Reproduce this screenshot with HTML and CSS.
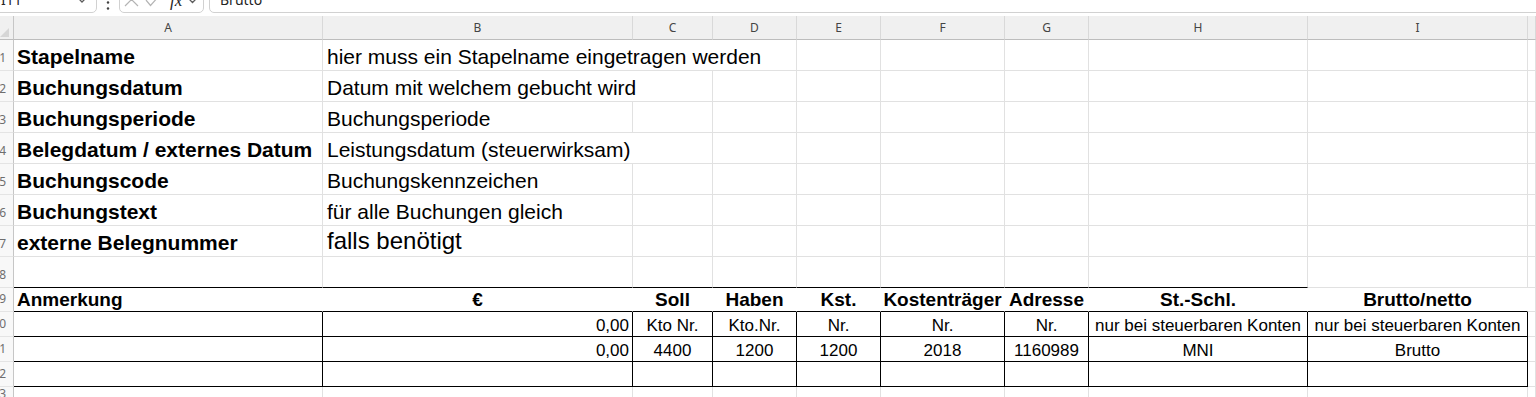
FILE: index.html
```html
<!DOCTYPE html>
<html lang="de">
<head>
    <meta charset="UTF-8">
    <meta name="viewport" content="width=device-width, initial-scale=1.0">
    <title>Buchungsstapel</title>
    <link rel="stylesheet" href="styles.css">
</head>
<body>
    <!-- formula bar, only its lower edge is visible -->
    <div class="formula-bar">
        <div class="name-box">
            <span>I11</span>
            <svg class="chevron" width="12" height="8" viewBox="0 0 12 8"><path d="M1 1 L6 6 L11 1" /></svg>
        </div>
        <div class="more">
            <svg width="4" height="13" viewBox="0 0 4 13"><circle cx="2" cy="2.5" r="1.2" /><circle cx="2" cy="8.5" r="1.2" /></svg>
        </div>
        <div class="fx-box">
            <svg class="muted" width="15" height="15" viewBox="0 0 15 15"><path d="M1 1 L14 14 M14 1 L1 14" /></svg>
            <svg class="muted" width="15" height="12" viewBox="0 0 15 12"><path d="M1 5 L5.5 10.5 L14 1" /></svg>
            <span class="fx">fx</span>
            <svg class="chevron" width="9" height="6" viewBox="0 0 9 6"><path d="M1 1 L4.5 4.5 L8 1" /></svg>
        </div>
        <div class="formula-input">Brutto</div>
    </div>

    <div class="sheet">
        <div class="sheet-row col-heads">
            <div class="corner"><svg width="10" height="10" viewBox="0 0 10 10"><path d="M0 10 L9 1 L9 10 Z" /></svg></div>
            <div class="col-head">A</div>
            <div class="col-head">B</div>
            <div class="col-head">C</div>
            <div class="col-head">D</div>
            <div class="col-head">E</div>
            <div class="col-head">F</div>
            <div class="col-head">G</div>
            <div class="col-head">H</div>
            <div class="col-head">I</div>
            <div class="col-head"></div>
        </div>

        <div class="sheet-row tall">
            <div class="row-head">1</div>
            <div class="cell label">Stapelname</div>
            <div class="cell text span-3">hier muss ein Stapelname eingetragen werden</div>
            <div class="cell"></div><div class="cell"></div><div class="cell"></div>
            <div class="cell"></div><div class="cell"></div><div class="cell"></div>
        </div>
        <div class="sheet-row tall">
            <div class="row-head">2</div>
            <div class="cell label">Buchungsdatum</div>
            <div class="cell text span-2">Datum mit welchem gebucht wird</div>
            <div class="cell"></div><div class="cell"></div><div class="cell"></div><div class="cell"></div>
            <div class="cell"></div><div class="cell"></div><div class="cell"></div>
        </div>
        <div class="sheet-row tall">
            <div class="row-head">3</div>
            <div class="cell label">Buchungsperiode</div>
            <div class="cell text">Buchungsperiode</div>
            <div class="cell"></div><div class="cell"></div><div class="cell"></div><div class="cell"></div>
            <div class="cell"></div><div class="cell"></div><div class="cell"></div><div class="cell"></div>
        </div>
        <div class="sheet-row tall">
            <div class="row-head">4</div>
            <div class="cell label">Belegdatum / externes Datum</div>
            <div class="cell text span-2">Leistungsdatum (steuerwirksam)</div>
            <div class="cell"></div><div class="cell"></div><div class="cell"></div><div class="cell"></div>
            <div class="cell"></div><div class="cell"></div><div class="cell"></div>
        </div>
        <div class="sheet-row tall">
            <div class="row-head">5</div>
            <div class="cell label">Buchungscode</div>
            <div class="cell text">Buchungskennzeichen</div>
            <div class="cell"></div><div class="cell"></div><div class="cell"></div><div class="cell"></div>
            <div class="cell"></div><div class="cell"></div><div class="cell"></div><div class="cell"></div>
        </div>
        <div class="sheet-row tall">
            <div class="row-head">6</div>
            <div class="cell label">Buchungstext</div>
            <div class="cell text">für alle Buchungen gleich</div>
            <div class="cell"></div><div class="cell"></div><div class="cell"></div><div class="cell"></div>
            <div class="cell"></div><div class="cell"></div><div class="cell"></div><div class="cell"></div>
        </div>
        <div class="sheet-row tall">
            <div class="row-head">7</div>
            <div class="cell label">externe Belegnummer</div>
            <div class="cell big">falls benötigt</div>
            <div class="cell"></div><div class="cell"></div><div class="cell"></div><div class="cell"></div>
            <div class="cell"></div><div class="cell"></div><div class="cell"></div><div class="cell"></div>
        </div>
        <div class="sheet-row tall">
            <div class="row-head">8</div>
            <div class="cell rule"></div><div class="cell rule"></div><div class="cell rule"></div><div class="cell rule"></div>
            <div class="cell rule"></div><div class="cell rule"></div><div class="cell rule"></div><div class="cell rule"></div>
            <div class="cell"></div><div class="cell"></div>
        </div>

        <!-- booking table -->
        <div class="sheet-row head-row">
            <div class="row-head">9</div>
            <div class="cell th">Anmerkung</div>
            <div class="cell th center">€</div>
            <div class="cell th center">Soll</div>
            <div class="cell th center">Haben</div>
            <div class="cell th center">Kst.</div>
            <div class="cell th center">Kostenträger</div>
            <div class="cell th center">Adresse</div>
            <div class="cell th center">St.-Schl.</div>
            <div class="cell th center">Brutto/netto</div>
            <div class="cell"></div>
        </div>
        <div class="sheet-row data-row">
            <div class="row-head">10</div>
            <div class="cell td"></div>
            <div class="cell td right">0,00</div>
            <div class="cell td center">Kto Nr.</div>
            <div class="cell td center">Kto.Nr.</div>
            <div class="cell td center">Nr.</div>
            <div class="cell td center">Nr.</div>
            <div class="cell td center">Nr.</div>
            <div class="cell td center">nur bei steuerbaren Konten</div>
            <div class="cell td center">nur bei steuerbaren Konten</div>
            <div class="cell"></div>
        </div>
        <div class="sheet-row data-row">
            <div class="row-head">11</div>
            <div class="cell td"></div>
            <div class="cell td right">0,00</div>
            <div class="cell td center">4400</div>
            <div class="cell td center">1200</div>
            <div class="cell td center">1200</div>
            <div class="cell td center">2018</div>
            <div class="cell td center">1160989</div>
            <div class="cell td center">MNI</div>
            <div class="cell td center">Brutto</div>
            <div class="cell"></div>
        </div>
        <div class="sheet-row data-row">
            <div class="row-head">12</div>
            <div class="cell td"></div><div class="cell td"></div><div class="cell td"></div>
            <div class="cell td"></div><div class="cell td"></div><div class="cell td"></div>
            <div class="cell td"></div><div class="cell td"></div><div class="cell td"></div>
            <div class="cell"></div>
        </div>
        <div class="sheet-row last-row">
            <div class="row-head">13</div>
            <div class="cell"></div><div class="cell"></div><div class="cell"></div><div class="cell"></div>
            <div class="cell"></div><div class="cell"></div><div class="cell"></div><div class="cell"></div>
            <div class="cell"></div><div class="cell"></div>
        </div>
    </div>
</body>
</html>
```

FILE: styles.css
```css
* {
    margin: 0;
    padding: 0;
    box-sizing: border-box;
}

body {
    background-color: #ffffff;
    color: #000000;
    font-family: "Liberation Sans", Arial, sans-serif;
    overflow: hidden;
}

/* Formula bar */
.formula-bar {
    height: 13px;
    display: flex;
    align-items: flex-end;
    overflow: hidden;
    font-family: "Noto Sans", sans-serif;
    font-size: 14px;
    color: #242424;
}

.name-box {
    margin-left: -6px;
    width: 103px;
    height: 30px;
    border: 1px solid #d1d1d1;
    border-radius: 0 0 5px 5px;
    display: flex;
    align-items: flex-end;
    justify-content: space-between;
    padding: 0 8px 4px 6px;
    line-height: 16px;
}

.chevron path {
    fill: none;
    stroke: #5c5c5c;
    stroke-width: 1.3;
}

.name-box .chevron {
    margin-bottom: 4px;
}

.more {
    width: 22px;
    height: 13px;
    display: flex;
    justify-content: center;
    align-items: flex-end;
}

.more circle {
    fill: #424242;
}

.fx-box {
    width: 85px;
    height: 30px;
    border: 1px solid #d1d1d1;
    border-radius: 0 0 5px 5px;
    display: flex;
    align-items: flex-end;
    gap: 6px;
    padding: 0 4px 5px 4px;
}

.muted path {
    fill: none;
    stroke: #b4b4b4;
    stroke-width: 1.2;
}

.fx {
    font-family: "Liberation Serif", serif;
    font-style: italic;
    font-size: 17px;
    line-height: 16px;
    margin-left: 4px;
    margin-bottom: -2px;
}

.fx-box .chevron {
    margin-bottom: 3px;
}

.formula-input {
    flex-grow: 1;
    margin-left: 5px;
    margin-right: -10px;
    height: 30px;
    border: 1px solid #d1d1d1;
    border-radius: 0 0 5px 5px;
    display: flex;
    align-items: flex-end;
    padding: 0 10px 4px 10px;
    line-height: 16px;
}

/* Sheet grid */
.sheet {
    margin-top: 3px;
}

.sheet-row {
    display: grid;
    grid-template-columns: 14px 309px 310px 80px 84px 84px 124px 84px 219px 220px 1fr;
}

.col-heads {
    height: 24px;
}

.corner,
.col-head {
    background-color: #f0f0f0;
    border-bottom: 1px solid #bdbdbd;
}

.corner {
    border-right: 1px solid #c6c6c6;
    display: flex;
    align-items: flex-end;
    padding-bottom: 2px;
}

.corner path {
    fill: #d6d6d6;
}

.col-head {
    border-right: 1px solid #d9d9d9;
    display: flex;
    justify-content: center;
    align-items: flex-end;
    padding-bottom: 4px;
    font-family: "Noto Sans", sans-serif;
    font-size: 12px;
    line-height: 14px;
    color: #444444;
}

.tall {
    height: 31px;
}

.head-row {
    height: 24px;
}

.data-row {
    height: 25px;
}

.last-row {
    height: 10px;
}

.row-head {
    background-color: #f8f8f8;
    border-right: 1px solid #c6c6c6;
    border-bottom: 1px solid #e4e4e4;
    display: flex;
    justify-content: flex-end;
    align-items: flex-end;
    padding: 0 7px 5px 0;
    overflow: hidden;
    font-family: "Noto Sans", sans-serif;
    font-size: 12px;
    line-height: 14px;
    color: #6e6e6e;
}

.last-row .row-head {
    align-items: flex-start;
    padding-bottom: 0;
    border-bottom: none;
}

.cell {
    border-right: 1px solid #e1e1e1;
    border-bottom: 1px solid #e1e1e1;
    display: flex;
    align-items: flex-end;
    padding: 0 3px;
    white-space: nowrap;
}

.last-row .cell {
    border-bottom: none;
}

.span-2 {
    grid-column: span 2;
}

.span-3 {
    grid-column: span 3;
}

.center {
    justify-content: center;
}

.right {
    justify-content: flex-end;
}

.label {
    font-weight: bold;
    font-size: 21px;
    line-height: 24px;
    padding-bottom: 1px;
}

.text {
    font-size: 21px;
    line-height: 24px;
    padding-left: 4px;
    padding-bottom: 1px;
}

.big {
    font-size: 24px;
    line-height: 27px;
    padding-left: 4px;
    padding-bottom: 2px;
}

/* top rule of the booking table */
.rule {
    border-bottom-color: #000000;
}

.th {
    font-weight: bold;
    font-size: 19px;
    line-height: 22px;
    border-right-color: transparent;
    border-bottom-color: #000000;
}

.td {
    font-size: 17px;
    line-height: 20px;
    border-right-color: #000000;
    border-bottom-color: #000000;
}
```
